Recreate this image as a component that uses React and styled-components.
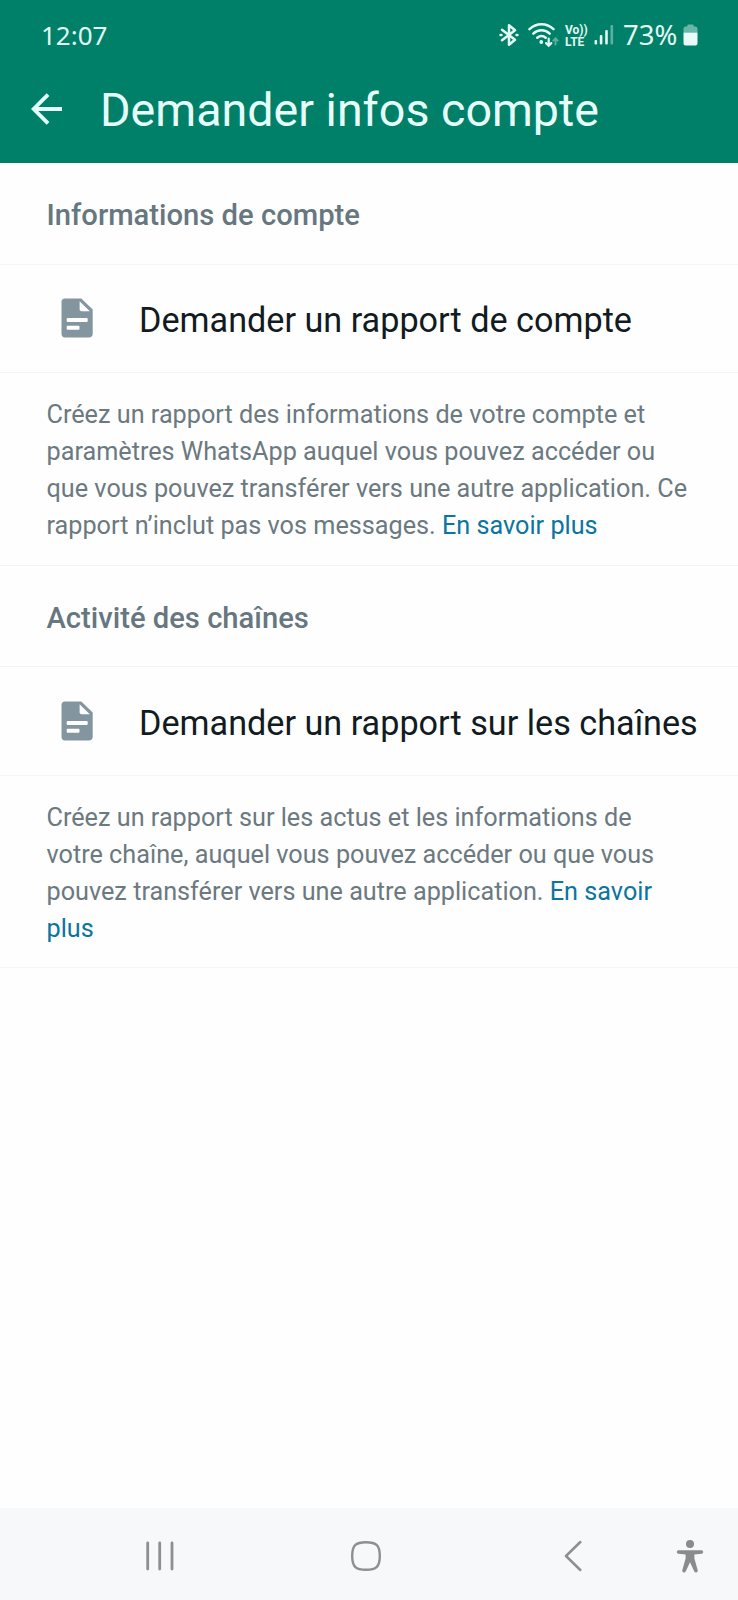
import React from 'react';
import styled, { createGlobalStyle } from 'styled-components';

// Content
const sections = [
  {
    heading: 'Informations de compte',
    action: 'Demander un rapport de compte',
    text: 'Créez un rapport des informations de votre compte et paramètres WhatsApp auquel vous pouvez accéder ou que vous pouvez transférer vers une autre application. Ce rapport n’inclut pas vos messages.',
  },
  {
    heading: 'Activité des chaînes',
    action: 'Demander un rapport sur les chaînes',
    text: 'Créez un rapport sur les actus et les informations de votre chaîne, auquel vous pouvez accéder ou que vous pouvez transférer vers une autre application.',
  },
];

// Icons
const BluetoothIcon = () => (
  <svg width="20" height="24" viewBox="0 0 20 24" fill="none" stroke="#e3f8f2" strokeWidth="2.5" strokeLinejoin="round" strokeLinecap="round">
    <path d="M3 6.8L16 16.7L10 21.8V2.2L16 7.3L3 17.2" />
    <path d="M1.6 12H2.4M17.6 12H18.4" strokeWidth="2.6" />
  </svg>
);

const WifiIcon = () => (
  <svg width="31" height="26" viewBox="0 0 31 26" fill="none" stroke="#e3f8f2" strokeWidth="2.5" strokeLinecap="round">
    <path d="M1.5 7.2C8.5 0.6 18.5 0.6 25.5 7.2" />
    <path d="M5.3 11.6C10 7.2 17 7.2 21.7 11.6" />
    <path d="M9.3 15.8C11.8 13.6 15.2 13.6 17.7 15.8" />
    <circle cx="13.3" cy="20" r="1.9" fill="#e3f8f2" stroke="none" />
    <path d="M20.7 16.5V23.3M18.1 21.1L20.7 23.7L23.3 21.1" strokeWidth="2.2" />
    <path d="M27.5 22.5V16.5M25.3 18.6L27.5 16.3L29.7 18.6" strokeWidth="1.9" opacity="0.4" />
  </svg>
);

const SignalIcon = () => (
  <svg width="20" height="22" viewBox="0 0 20 22" fill="#e3f8f2">
    <rect x="0.5" y="16" width="2.6" height="4.5" rx="1" />
    <rect x="5.8" y="11" width="2.6" height="9.5" rx="1" />
    <rect x="11.2" y="6" width="2.6" height="14.5" rx="1" />
    <rect x="16.5" y="1" width="2.6" height="19.5" rx="1" opacity="0.4" />
  </svg>
);

const BatteryIcon = () => (
  <svg width="15" height="22" viewBox="0 0 15 22" fill="#e8fbf6">
    <path d="M4.3 2.6V1.6Q4.3 0.6 5.3 0.6H9.7Q10.7 0.6 10.7 1.6V2.6H12.3Q14.5 2.6 14.5 4.8V8.5H0.5V4.8Q0.5 2.6 2.7 2.6Z" opacity="0.45" />
    <path d="M0.5 8.5H14.5V19.5Q14.5 21.5 12.5 21.5H2.5Q0.5 21.5 0.5 19.5Z" />
  </svg>
);

const BackArrow = () => (
  <svg width="34" height="34" viewBox="0 0 34 34" fill="none" stroke="#e6fffa" strokeWidth="3.8">
    <path d="M32 17H4M18 2.7L3.7 17L18 31.3" />
  </svg>
);

const DocumentIcon = () => (
  <svg width="32" height="40" viewBox="0 0 32 40">
    <path fill="#8396a0" d="M4 0.5H20.3L31.7 11.5V35.5Q31.7 39.5 27.7 39.5H4Q0.5 39.5 0.5 35.5V4Q0.5 0.5 4 0.5Z" />
    <path fill="#fff" d="M18.6 3.2L28.8 13.2H20.6Q18.6 13.2 18.6 11.2Z" />
    <rect fill="#fff" x="5.7" y="20" width="21" height="4" rx="1" />
    <rect fill="#fff" x="5.7" y="27.8" width="12.8" height="4" rx="1" />
  </svg>
);

const RecentsIcon = () => (
  <svg width="30" height="30" viewBox="0 0 30 30" stroke="#8e8f90" strokeWidth="2.8" strokeLinecap="round">
    <path d="M2.7 2V28M14.7 2V28M27 2V28" />
  </svg>
);

const HomeIcon = () => (
  <svg width="32" height="32" viewBox="0 0 32 32" fill="none" stroke="#8e8f90" strokeWidth="2.4">
    <path d="M16 2.2C26.5 2.2 29.8 5.5 29.8 16S26.5 29.8 16 29.8S2.2 26.5 2.2 16S5.5 2.2 16 2.2Z" />
  </svg>
);

const BackIcon = () => (
  <svg width="18" height="32" viewBox="0 0 18 32" fill="none" stroke="#8e8f90" strokeWidth="2.5" strokeLinecap="round" strokeLinejoin="round">
    <path d="M16.3 2L2 16L16.3 30" />
  </svg>
);

const AccessibilityIcon = () => (
  <svg width="28" height="34" viewBox="0 0 28 34" fill="#8b8b8c">
    <circle cx="14" cy="5" r="4" />
    <path d="M2.4 11.2H25.6Q27.2 11.3 27.2 12.9Q27.2 14.5 25.6 14.7L18.4 15.6V19.5L21.7 31.2Q22 33 20.4 33.4Q18.9 33.6 18.2 32.2L14 23.2L9.8 32.2Q9.1 33.6 7.6 33.4Q6 33 6.3 31.2L9.6 19.5V15.6L2.4 14.7Q0.8 14.5 0.8 12.9Q0.8 11.3 2.4 11.2Z" />
  </svg>
);

function App() {
  return (
    <Screen>
      <GlobalStyle />
      <Header>
        <StatusBar>
          <Clock>12:07</Clock>
          <StatusIcons>
            <BluetoothIcon />
            <WifiIcon />
            <Volte>
              <span>Vo))</span>
              <span>LTE</span>
            </Volte>
            <SignalIcon />
            <Percent>73%</Percent>
            <BatteryIcon />
          </StatusIcons>
        </StatusBar>
        <TitleBar>
          <BackArrow />
          <Title>Demander infos compte</Title>
        </TitleBar>
      </Header>

      <Content>
        {sections.map(section => (
          <section key={section.heading}>
            <Heading>{section.heading}</Heading>
            <ActionRow>
              <DocumentIcon />
              <ActionLabel>{section.action}</ActionLabel>
            </ActionRow>
            <Description>
              {section.text} <Link>En savoir plus</Link>
            </Description>
          </section>
        ))}
      </Content>

      <NavBar>
        <RecentsIcon />
        <HomeIcon />
        <BackIcon />
        <AccessibilityIcon />
      </NavBar>
    </Screen>
  );
}

export default App;

const GlobalStyle = createGlobalStyle`
  * {
    box-sizing: border-box;
  }

  body {
    margin: 0;
    background: #fefefe;
    font-family: Roboto, "Liberation Sans", sans-serif;
  }

  svg {
    display: block;
    flex: none;
  }
`;

const Screen = styled.div`
  display: flex;
  flex-direction: column;
  width: 738px;
  height: 1600px;
  overflow: hidden;
`;

const Header = styled.header`
  height: 163px;
  background: #008069;
`;

const StatusBar = styled.div`
  display: flex;
  justify-content: space-between;
  height: 70px;
  padding: 0 40px;
  color: #e3f8f2;
`;

const Clock = styled.span`
  padding-left: 1px;
  font-family: "Noto Sans", Roboto, sans-serif;
  font-size: 26px;
  line-height: 70px;
`;

const StatusIcons = styled.div`
  display: flex;
  align-items: center;

  svg:first-child {
    margin-right: 9px;
  }
`;

const Volte = styled.div`
  display: flex;
  flex-direction: column;
  width: 22px;
  margin: 2px 7px 0 6px;
  font-size: 12px;
  font-weight: 700;
  line-height: 12.5px;
`;

const Percent = styled.span`
  width: 60px;
  margin-left: 9px;
  font-family: "Noto Sans", Roboto, sans-serif;
  font-size: 27.5px;
  line-height: 70px;
`;

const TitleBar = styled.div`
  display: flex;
  align-items: center;
  height: 77px;
  padding-left: 30px;
`;

const Title = styled.h1`
  margin: 3px 0 0 36px;
  font-size: 46.6px;
  font-weight: 400;
  color: #e6fffa;
  white-space: nowrap;
`;

const Content = styled.main`
  flex: 1;
`;

const Heading = styled.h2`
  height: 101.5px;
  margin: 0;
  padding-left: 46.5px;
  border-bottom: 1px solid #f3f4f4;
  font-size: 29.2px;
  font-weight: 500;
  line-height: 104px;
  color: #667780;
`;

const ActionRow = styled.div`
  display: flex;
  align-items: center;
  height: 108.5px;
  padding-left: 61px;
  border-bottom: 1px solid #f3f4f4;
`;

const ActionLabel = styled.span`
  margin: 4px 0 0 46px;
  font-size: 34.2px;
  color: #111b21;
  white-space: nowrap;
`;

const Description = styled.p`
  height: 192.5px;
  margin: 0;
  padding: 23px 46px 0 46.5px;
  border-bottom: 1px solid #f3f4f4;
  font-size: 25.22px;
  line-height: 37px;
  color: #6b7980;
`;

const Link = styled.span`
  color: #0b75a0;
`;

const NavBar = styled.nav`
  display: grid;
  grid-template-columns: 205px 214px 112px 28px;
  align-items: center;
  height: 92px;
  padding: 4px 0 0 145px;
  background: #f7f8fa;
`;
